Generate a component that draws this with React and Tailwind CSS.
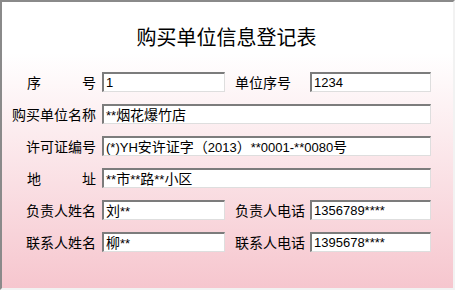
import React from "react";

function C({ children }) {
  return <span className="text-[14px] font-['Noto_Sans_CJK_SC',sans-serif]">{children}</span>;
}

function Field({ children, wide }) {
  return (
    <div
      className={
        "h-[20px] bg-white border-t-2 border-l-2 border-b border-r border-t-[#7c7c7c] border-l-[#7c7c7c] border-b-[#dedede] border-r-[#dedede] pl-[2px] text-[13px] leading-[17px] text-black whitespace-nowrap overflow-hidden font-['Liberation_Sans','Noto_Sans_CJK_SC',sans-serif] " +
        (wide ? "col-span-3" : "")
      }
    >
      {children}
    </div>
  );
}

function Label({ children, right, spread }) {
  if (spread) {
    return (
      <div className="h-[20px] flex items-center justify-end">
        <div className="w-[69px] flex justify-between text-[14px] leading-[20px] text-black font-['Noto_Sans_CJK_SC',sans-serif]">
          <span>{spread[0]}</span>
          <span>{spread[1]}</span>
        </div>
      </div>
    );
  }
  return (
    <div
      className={
        "h-[20px] flex items-center text-[14px] leading-[20px] text-black whitespace-nowrap font-['Noto_Sans_CJK_SC',sans-serif] " +
        (right ? "pl-[4px]" : "justify-end")
      }
    >
      {children}
    </div>
  );
}

export default function App() {
  return (
    <div className="w-[455px] h-[290px] border-t-2 border-l-2 border-t-[#8a8a8a] border-l-[#8a8a8a] border-r-2 border-b-2 border-r-[#f2f2f2] border-b-[#f2f2f2] bg-[linear-gradient(to_bottom,#ffffff_18%,#f6c6ce_100%)] overflow-hidden">
      <h1 className="pt-[25px] pr-[2px] text-center text-[20px] leading-[20px] text-black font-['Noto_Sans_CJK_SC',sans-serif]">
        购买单位信息登记表
      </h1>
      <div className="mt-[25px] grid grid-cols-[94px_123px_73px_121px] gap-x-[6px] gap-y-[12px]">
        <Label spread={["序", "号"]} />
        <Field>1</Field>
        <Label right>单位序号</Label>
        <Field>1234</Field>

        <Label>购买单位名称</Label>
        <Field wide>
          **<C>烟花爆竹店</C>
        </Field>

        <Label>许可证编号</Label>
        <Field wide>
          (*)YH<C>安许证字（</C>2013<C>）</C>**0001-**0080<C>号</C>
        </Field>

        <Label spread={["地", "址"]} />
        <Field wide>
          **<C>市</C>**<C>路</C>**<C>小区</C>
        </Field>

        <Label>负责人姓名</Label>
        <Field>
          <C>刘</C>**
        </Field>
        <Label right>负责人电话</Label>
        <Field>1356789****</Field>

        <Label>联系人姓名</Label>
        <Field>
          <C>柳</C>**
        </Field>
        <Label right>联系人电话</Label>
        <Field>1395678****</Field>
      </div>
    </div>
  );
}
